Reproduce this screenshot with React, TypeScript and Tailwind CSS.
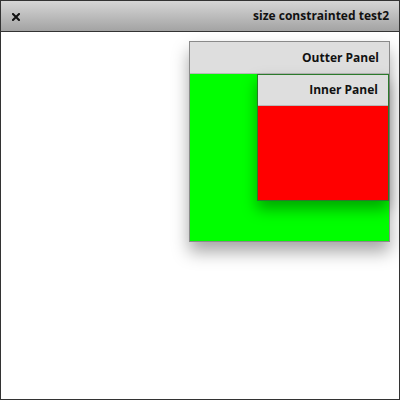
import React from "react";

export default function App() {
  return (
    <div
      className="w-[400px] h-[400px] border border-[#333] bg-white flex flex-col overflow-hidden"
      style={{ fontFamily: '"Open Sans", "Noto Sans", sans-serif' }}
    >
      <div className="h-[31px] shrink-0 border-b border-[#333] bg-gradient-to-b from-[#d6d6d6] to-[#a3a3a3] flex items-center justify-between pl-[11px] pr-[10px]">
        <svg width="8" height="8" viewBox="0 0 8 8" className="mt-[1px]">
          <path d="M1 1 L7 7 M7 1 L1 7" stroke="#111" strokeWidth="2" strokeLinecap="square" />
        </svg>
        <span className="text-[12px] font-bold text-[#111] leading-none">size constrainted test2</span>
      </div>
      <div className="flex-1 flex justify-end items-start pt-[9px] pr-[9px]">
        <div className="w-[201px] h-[201px] border border-[#8a8a8a] flex flex-col shadow-[0_10px_16px_rgba(0,0,0,0.35)]">
          <div className="h-[32px] shrink-0 bg-[#dedede] border-b border-[#b8b8b8] flex items-center justify-end pr-[10px]">
            <span className="text-[12px] font-bold text-[#111]">Outter Panel</span>
          </div>
          <div className="flex-1 bg-[#00ff00] flex justify-end items-start">
            <div className="w-[132px] h-[127px] border border-[#2a7a2a] flex flex-col shadow-[0_8px_14px_rgba(0,0,0,0.35)]">
              <div className="h-[31px] shrink-0 bg-[#dedede] border-b border-[#b8b8b8] flex items-center justify-end pr-[10px]">
                <span className="text-[12px] font-bold text-[#111]">Inner Panel</span>
              </div>
              <div className="flex-1 bg-[#ff0000]" />
            </div>
          </div>
        </div>
      </div>
    </div>
  );
}
